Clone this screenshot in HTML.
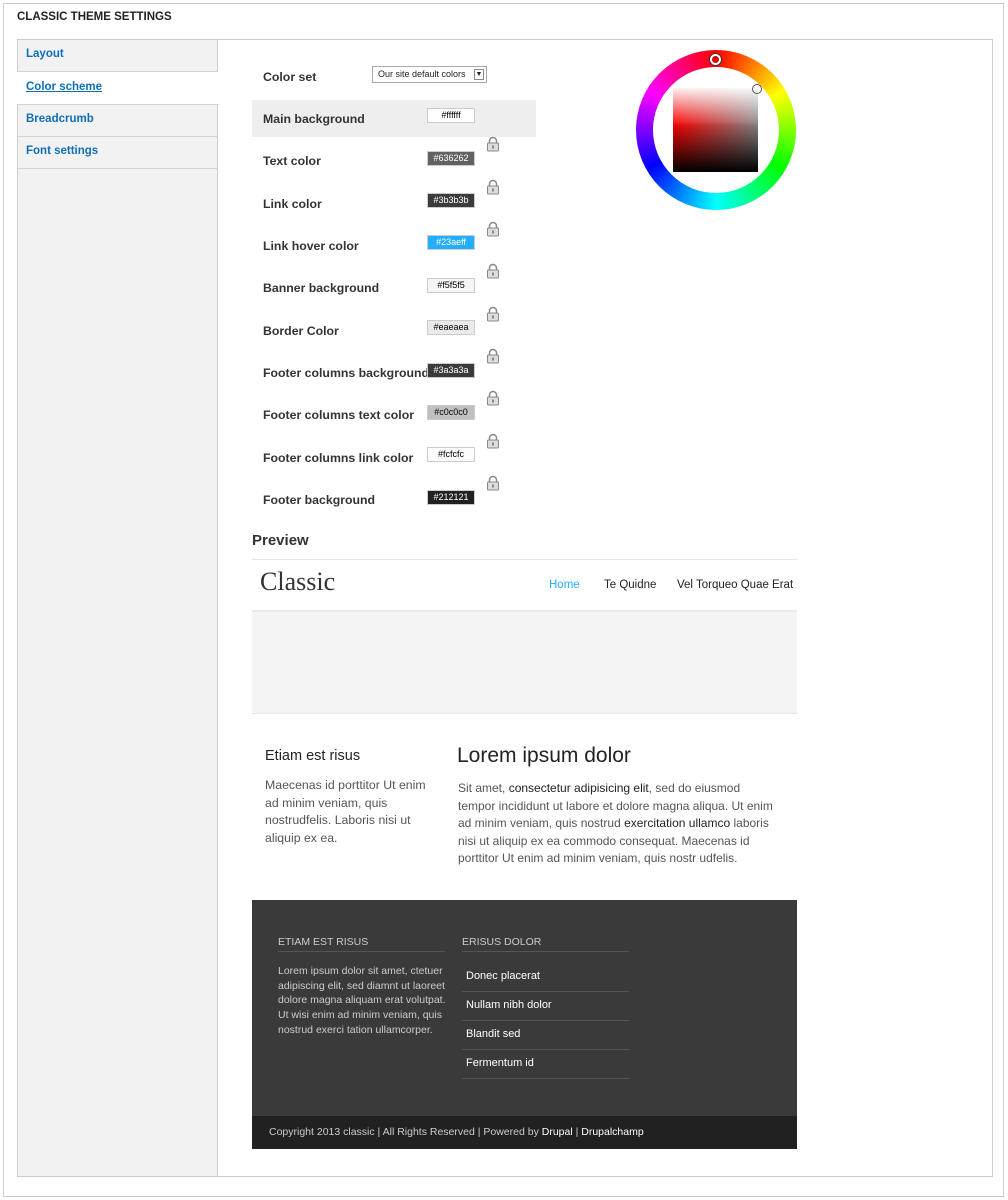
<!DOCTYPE html>
<html><head><meta charset="utf-8"><style>
*{margin:0;padding:0;box-sizing:border-box}
body{width:1008px;height:1200px;background:#fff;position:relative;font-family:"Liberation Sans",sans-serif;overflow:hidden}
.a{position:absolute;font-family:"Liberation Sans",sans-serif}
.lbl{position:absolute;left:263px;font-family:"Liberation Sans",sans-serif;font-weight:bold;font-size:12.3px;color:#333}
.sw{position:absolute;left:427px;width:48px;height:15px;font-size:9px;text-align:center;line-height:13px;border:1px solid #ccc;font-family:"Liberation Sans",sans-serif}
.tab{position:absolute;left:17px;width:201px;height:33px;border-bottom:1px solid #d4d4d4;font-family:"Liberation Sans",sans-serif;font-weight:bold;font-size:11.5px;color:#0d6fb8;padding:9px 9px}
.fl{position:absolute;left:462px;width:167px;border-bottom:1px solid #555;color:#fff;font-size:11px;padding-left:4px;font-family:"Liberation Sans",sans-serif}
</style></head><body>
<div class="a" style="left:3px;top:3px;width:1001px;height:1194px;border:1px solid #ccc"></div>
<div class="a" style="left:17px;top:11px;font-weight:bold;font-size:11.5px;color:#222">CLASSIC THEME SETTINGS</div>
<div class="a" style="left:17px;top:39px;width:976px;height:1138px;border:1px solid #ccc"></div>
<div class="a" style="left:18px;top:40px;width:200px;height:1136px;background:#f2f2f2;border-right:1px solid #ccc"></div>
<div class="tab" style="top:39px">Layout</div>
<div class="tab" style="top:72px;background:#fff;width:202px"><u>Color scheme</u></div>
<div class="tab" style="top:104px">Breadcrumb</div>
<div class="tab" style="top:136px">Font settings</div>

<div class="lbl" style="top:70px">Color set</div>
<div class="a" style="left:372px;top:66px;width:115px;height:17px;border:1px solid #aaa;font-size:9px;padding:2px 5px;color:#222">Our site default colors<span style="position:absolute;right:2px;top:2px;width:10px;height:11px;border:1px solid #888;font-size:7px;line-height:10px;text-align:center">▼</span></div>
<div class="a" style="left:252px;top:100px;width:284px;height:37px;background:#eee"></div>
<div class="lbl" style="top:112px">Main background</div>
<div class="sw" style="top:108px;background:#fff;color:#000">#ffffff</div>

<div class="lbl" style="top:154px">Text color</div><div class="sw" style="top:151px;background:#636262;color:#fff">#636262</div>
<div class="lbl" style="top:197px">Link color</div><div class="sw" style="top:193px;background:#3b3b3b;color:#fff">#3b3b3b</div>
<div class="lbl" style="top:239px">Link hover color</div><div class="sw" style="top:235px;background:#23aeff;color:#fff">#23aeff</div>
<div class="lbl" style="top:281px">Banner background</div><div class="sw" style="top:278px;background:#f5f5f5;color:#000">#f5f5f5</div>
<div class="lbl" style="top:324px">Border Color</div><div class="sw" style="top:320px;background:#eaeaea;color:#000">#eaeaea</div>
<div class="lbl" style="top:366px">Footer columns background</div><div class="sw" style="top:363px;background:#3a3a3a;color:#fff">#3a3a3a</div>
<div class="lbl" style="top:408px">Footer columns text color</div><div class="sw" style="top:405px;background:#c0c0c0;color:#000">#c0c0c0</div>
<div class="lbl" style="top:451px">Footer columns link color</div><div class="sw" style="top:447px;background:#fcfcfc;color:#000">#fcfcfc</div>
<div class="lbl" style="top:493px">Footer background</div><div class="sw" style="top:490px;background:#212121;color:#fff">#212121</div>

<svg class="a" style="left:0;top:0" width="1008" height="520">
<defs><g id="lk"><path d="M2.5 6V4a3.5 3.5 0 0 1 7 0v2" fill="none" stroke="#888" stroke-width="1.5"/><rect x="0.5" y="6" width="11" height="8" rx="1" fill="#ddd" stroke="#888"/><rect x="5" y="8.5" width="2" height="3" fill="#888"/></g></defs>
<use href="#lk" x="487" y="137"/><use href="#lk" x="487" y="180"/><use href="#lk" x="487" y="222"/><use href="#lk" x="487" y="264"/><use href="#lk" x="487" y="307"/><use href="#lk" x="487" y="349"/><use href="#lk" x="487" y="391"/><use href="#lk" x="487" y="434"/><use href="#lk" x="487" y="476"/>
</svg>

<div class="a" style="left:636px;top:50px;width:160px;height:160px;border-radius:50%;background:conic-gradient(red,#ff0 60deg,#0f0 120deg,#0ff 180deg,#00f 240deg,#f0f 300deg,red 360deg)"></div>
<div class="a" style="left:653px;top:67px;width:126px;height:126px;border-radius:50%;background:#fff"></div>
<div class="a" style="left:673px;top:88px;width:85px;height:84px;background:linear-gradient(to bottom,rgba(255,255,255,.95),rgba(255,255,255,0) 45%),linear-gradient(to bottom,rgba(0,0,0,0) 40%,#000),linear-gradient(to right,red,#888)"></div>
<div class="a" style="left:710px;top:54px;width:11px;height:11px;border-radius:50%;border:2px solid #fff;box-shadow:0 0 0 1px #333;background:#d00"></div>
<div class="a" style="left:752px;top:84px;width:10px;height:10px;border-radius:50%;border:1.5px solid #555;background:transparent"></div>

<div class="a" style="left:252px;top:532px;font-weight:bold;font-size:15px;color:#333">Preview</div>
<div class="a" style="left:252px;top:559px;width:545px;border-top:1px solid #e6e6e6"></div>
<div class="a" style="left:260px;top:567px;font-family:'Liberation Serif',serif;font-size:26px;color:#333">Classic</div>
<div class="a" style="left:549px;top:579px;font-size:11.5px;color:#23aeff">Home</div>
<div class="a" style="left:604px;top:579px;font-size:11.5px;color:#222">Te Quidne</div>
<div class="a" style="left:677px;top:579px;font-size:11.5px;color:#222">Vel Torqueo Quae Erat</div>
<div class="a" style="left:252px;top:610px;width:545px;height:104px;background:#f4f4f4;border-top:2px solid #eaeaea;border-bottom:1px solid #e6e6e6"></div>
<div class="a" style="left:265px;top:748px;font-size:14.5px;color:#222">Etiam est risus</div>
<div class="a" style="left:265px;top:777px;width:170px;font-size:12.3px;line-height:17.5px;color:#555">Maecenas id porttitor Ut enim ad minim veniam, quis nostrudfelis. Laboris nisi ut aliquip ex ea.</div>
<div class="a" style="left:457px;top:744px;font-size:21px;color:#222">Lorem ipsum dolor</div>
<div class="a" style="left:458px;top:780px;width:318px;font-size:12px;line-height:17.5px;color:#555">Sit amet, <span style="color:#222">consectetur adipisicing elit</span>, sed do eiusmod tempor incididunt ut labore et dolore magna aliqua. Ut enim ad minim veniam, quis nostrud <span style="color:#222">exercitation ullamco</span> laboris nisi ut aliquip ex ea commodo consequat. Maecenas id porttitor Ut enim ad minim veniam, quis nostr udfelis.</div>

<div class="a" style="left:252px;top:900px;width:545px;height:216px;background:#3a3a3a"></div>
<div class="a" style="left:278px;top:936px;width:167px;border-bottom:1px solid #555;font-size:10.5px;color:#ccc;padding-bottom:3px">ETIAM EST RISUS</div>
<div class="a" style="left:278px;top:964px;width:170px;font-size:10.5px;line-height:14.7px;color:#ccc">Lorem ipsum dolor sit amet, ctetuer adipiscing elit, sed diamnt ut laoreet dolore magna aliquam erat volutpat. Ut wisi enim ad minim veniam, quis nostrud exerci tation ullamcorper.</div>
<div class="a" style="left:462px;top:936px;width:167px;border-bottom:1px solid #555;font-size:10.5px;color:#ccc;padding-bottom:3px">ERISUS DOLOR</div>
<div class="fl" style="top:962px;height:30px;padding-top:8px">Donec placerat</div>
<div class="fl" style="top:992px;height:29px;padding-top:7px">Nullam nibh dolor</div>
<div class="fl" style="top:1021px;height:29px;padding-top:7px">Blandit sed</div>
<div class="fl" style="top:1050px;height:29px;padding-top:7px">Fermentum id</div>
<div class="a" style="left:252px;top:1116px;width:545px;height:33px;background:#212121;font-size:10.5px;color:#ccc;padding:10px 17px;white-space:nowrap">Copyright 2013 classic | All Rights Reserved | Powered by <span style="color:#fff">Drupal</span> | <span style="color:#fff">Drupalchamp</span></div>
</body></html>
